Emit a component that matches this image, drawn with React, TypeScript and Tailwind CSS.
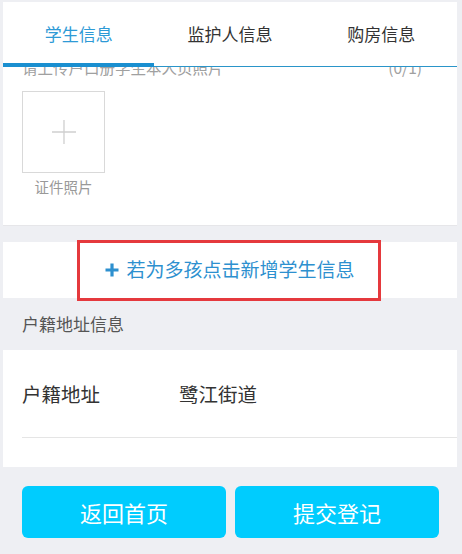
const font = "font-['Noto_Sans_CJK_SC','Noto_Sans',sans-serif]";

interface TabProps {
  label: string;
  active?: boolean;
}

function Tab({ label, active = false }: TabProps) {
  return (
    <div className="relative flex-1 flex items-center justify-center">
      <span
        className={`text-[17px] ${active ? "text-[#2e9ad6]" : "text-[#333]"}`}
      >
        {label}
      </span>
      {active && (
        <div className="absolute left-0 right-0 bottom-[-1px] h-[4px] bg-[#1a8fd0]" />
      )}
    </div>
  );
}

function UploadBox() {
  return (
    <div className="flex flex-col items-center w-[83px]">
      <div className="w-[83px] h-[82px] border border-[#d9d9d9] bg-white flex items-center justify-center">
        <svg width="26" height="26" viewBox="0 0 26 26">
          <path d="M13 1v24M1 13h24" stroke="#cfcfcf" strokeWidth="1.3" />
        </svg>
      </div>
      <span className="mt-[4px] text-[14.5px] leading-[20px] text-[#999]">
        证件照片
      </span>
    </div>
  );
}

export default function App() {
  return (
    <div
      className={`${font} w-full h-[554px] overflow-hidden bg-[#eeeff3] pt-[2px] pl-[3px] pr-[5px] flex flex-col`}
    >
      {/* tabs */}
      <div className="h-[65px] shrink-0 flex bg-white border-b border-[#2a95c9] relative z-10">
        <Tab label="学生信息" active />
        <Tab label="监护人信息" />
        <Tab label="购房信息" />
      </div>

      {/* student section, scrolled */}
      <div className="h-[159px] shrink-0 overflow-hidden bg-white border-b border-[#e6e6e9]">
        <div className="-mt-[10px] px-[19px] flex justify-between text-[15.5px] leading-[20px] text-[#a0a0a0]">
          <span>请上传户口册学生本人页照片</span>
          <span className="pr-[16px]">(0/1)</span>
        </div>
        <div className="mt-[14px] pl-[19px]">
          <UploadBox />
        </div>
      </div>

      <div className="h-[16px] shrink-0" />

      {/* add student */}
      <div className="relative h-[56px] shrink-0 bg-white flex items-center justify-center">
        <div className="flex items-center gap-[7px] text-[#2d90cf] text-[19px] -mt-[1px]">
          <svg width="14" height="14" viewBox="0 0 14 14">
            <path d="M7 0.5v13M0.5 7h13" stroke="#2d90cf" strokeWidth="3.2" />
          </svg>
          <span>若为多孩点击新增学生信息</span>
        </div>
        <div className="absolute left-[74px] top-[-2px] w-[304px] h-[61px] border-[3px] border-[#e5393d]" />
      </div>

      {/* address header */}
      <div className="h-[52px] shrink-0 flex items-center px-[19px] text-[17px] text-[#555]">
        户籍地址信息
      </div>

      {/* address row */}
      <div className="h-[117px] shrink-0 bg-white flex flex-col">
        <div className="h-[88px] flex items-center ml-[19px] border-b border-[#e5e5e5] text-[19.5px] text-[#333]">
          <span className="w-[157px]">户籍地址</span>
          <span>鹭江街道</span>
        </div>
      </div>

      {/* buttons */}
      <div className="flex-1 flex gap-[9px] pt-[19px] pl-[19px] pr-[18px]">
        <button className="w-[204px] h-[52px] rounded-[6px] bg-[#00ccfe] text-white text-[22px] flex items-center justify-center">
          返回首页
        </button>
        <button className="w-[204px] h-[52px] rounded-[6px] bg-[#00ccfe] text-white text-[22px] flex items-center justify-center">
          提交登记
        </button>
      </div>
    </div>
  );
}
